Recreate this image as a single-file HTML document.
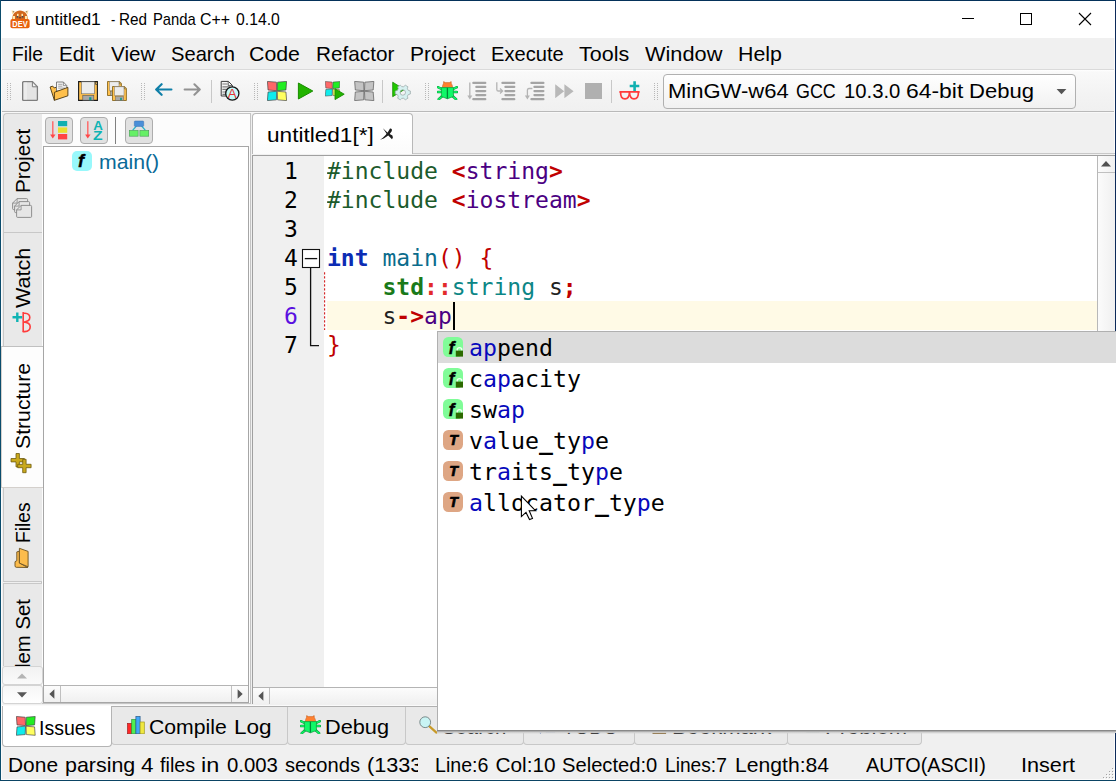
<!DOCTYPE html>
<html lang="en"><head><meta charset="utf-8"><title>untitled1 - Red Panda C++ 0.14.0</title>
<style>
html,body{margin:0;padding:0;background:#f0f0f0;}
body{width:1116px;height:781px;overflow:hidden;position:relative;font-family:"Liberation Sans",sans-serif;}
#w{position:absolute;left:0;top:0;width:1116px;height:781px;overflow:hidden;background:#f0f0f0;}
#w div,#w svg,#w span.t{position:absolute;box-sizing:border-box;}
span.t{white-space:pre;line-height:normal;transform-origin:0 0;font-family:"Liberation Sans",sans-serif;}
span.m{font-family:"DejaVu Sans Mono","Liberation Mono",monospace;}
.tab{background:#e9e9e9;border:1px solid #c8c8c8;}
.btn{background:#e1e1e1;border:1px solid #adadad;border-radius:4px;}
</style></head>
<body><div id="w">
<div style="left:1px;top:38px;width:1px;height:742px;background:#fbfbfb;"></div>
<div style="left:1114px;top:38px;width:1px;height:742px;background:#fbfbfb;"></div>
<div style="left:1px;top:779px;width:1114px;height:1px;background:#fbfbfb;"></div>
<div style="left:1px;top:1px;width:1114px;height:37px;background:#fff;"></div>
<svg style="left:10px;top:9px;" width="20" height="20" viewBox="0 0 20 20"><path d="M2.2 5.5L1.6 1.2L5.6 2.6Z" fill="#ffe2a8"/><path d="M17.8 5.5L18.4 1.2L14.4 2.6Z" fill="#ffe2a8"/><path d="M3 3.6L2.8 2.2L4.3 2.8Z" fill="#4a4a52"/><path d="M17 3.6L17.2 2.2L15.7 2.8Z" fill="#4a4a52"/><path d="M2 11C2 5 5.5 1.6 10 1.6C14.5 1.6 18 5 18 11Z" fill="#d2691e"/><rect x="2.6" y="7" width="2.4" height="3.4" fill="#ffe9b0"/><rect x="15" y="7" width="2.4" height="3.4" fill="#ffe9b0"/><rect x="7" y="4.8" width="1.6" height="2.4" fill="#ffe9b0"/><rect x="11.4" y="4.8" width="1.6" height="2.4" fill="#ffe9b0"/><rect x="6.6" y="7" width="1.6" height="1.6" fill="#4a4a52"/><rect x="11.8" y="7" width="1.6" height="1.6" fill="#4a4a52"/><path d="M8.8 8.2H11.2L10 9.8Z" fill="#3a3a42"/><rect x="0.4" y="10" width="19.2" height="9.2" rx="2" fill="#e8620c"/><text x="10" y="17.6" font-family="Liberation Sans, sans-serif" font-weight="bold" font-size="8.4" text-anchor="middle" fill="#fff" textLength="15.4" lengthAdjust="spacingAndGlyphs">DEV</text></svg>
<span class="t" style="left:34.74px;top:10.20px;font-size:16.4px;color:#000;transform:scaleX(1.0617);">untitled1</span>
<span class="t" style="left:110.50px;top:10.20px;font-size:16.4px;color:#000;transform:scaleX(0.7800);">-</span>
<span class="t" style="left:119.47px;top:10.20px;font-size:16.4px;color:#000;transform:scaleX(0.9321);">Red</span>
<span class="t" style="left:152.60px;top:10.20px;font-size:16.4px;color:#000;transform:scaleX(0.9021);">Panda</span>
<span class="t" style="left:200.33px;top:10.20px;font-size:16.4px;color:#000;transform:scaleX(0.9700);">C++</span>
<span class="t" style="left:236.20px;top:10.20px;font-size:16.4px;color:#000;transform:scaleX(0.9622);">0.14.0</span>
<svg style="left:960px;top:10px;" width="20" height="20" viewBox="0 0 20 20"><path d="M2 8.5H14" stroke="#000" stroke-width="1" fill="none"/></svg>
<svg style="left:1015px;top:10px;" width="20" height="20" viewBox="0 0 20 20"><rect x="5.5" y="3.5" width="11" height="11" stroke="#000" stroke-width="1" fill="none"/></svg>
<svg style="left:1075px;top:10px;" width="20" height="20" viewBox="0 0 20 20"><path d="M4 3L16 15M16 3L4 15" stroke="#000" stroke-width="1.1" fill="none"/></svg>
<span class="t" style="left:12.47px;top:41.70px;font-size:20.8px;color:#000;transform:scaleX(0.9250);">File</span>
<span class="t" style="left:58.71px;top:41.70px;font-size:20.8px;color:#000;transform:scaleX(0.9886);">Edit</span>
<span class="t" style="left:111.00px;top:41.70px;font-size:20.8px;color:#000;transform:scaleX(0.9911);">View</span>
<span class="t" style="left:171.03px;top:41.70px;font-size:20.8px;color:#000;transform:scaleX(0.9688);">Search</span>
<span class="t" style="left:249.47px;top:41.70px;font-size:20.8px;color:#000;transform:scaleX(1.0250);">Code</span>
<span class="t" style="left:315.50px;top:41.70px;font-size:20.8px;color:#000;transform:scaleX(0.9974);">Refactor</span>
<span class="t" style="left:410.09px;top:41.70px;font-size:20.8px;color:#000;transform:scaleX(1.0109);">Project</span>
<span class="t" style="left:491.03px;top:41.70px;font-size:20.8px;color:#000;transform:scaleX(0.9671);">Execute</span>
<span class="t" style="left:578.90px;top:41.70px;font-size:20.8px;color:#000;transform:scaleX(1.0333);">Tools</span>
<span class="t" style="left:644.90px;top:41.70px;font-size:20.8px;color:#000;transform:scaleX(1.0459);">Window</span>
<span class="t" style="left:737.87px;top:41.70px;font-size:20.8px;color:#000;transform:scaleX(1.0268);">Help</span>
<div style="left:2px;top:69px;width:1112px;height:1px;background:#dadada;"></div>
<div style="left:2px;top:70px;width:1112px;height:41px;background:linear-gradient(180deg,#ffffff 0,#f9f9f9 2px,#f3f3f3 60%,#f0f0f0 100%);"></div>
<div style="left:2px;top:111px;width:1112px;height:1px;background:#b9b9b9;"></div>
<div style="left:2px;top:112px;width:1112px;height:1px;background:#f8f8f8;"></div>
<svg style="left:7px;top:83px;" width="5" height="18" viewBox="0 0 5 18"><rect x="0" y="0" width="1" height="1" fill="#b8b8b8"/><rect x="3" y="0" width="1" height="1" fill="#b8b8b8"/><rect x="0" y="2" width="1" height="1" fill="#b8b8b8"/><rect x="3" y="2" width="1" height="1" fill="#b8b8b8"/><rect x="0" y="4" width="1" height="1" fill="#b8b8b8"/><rect x="3" y="4" width="1" height="1" fill="#b8b8b8"/><rect x="0" y="6" width="1" height="1" fill="#b8b8b8"/><rect x="3" y="6" width="1" height="1" fill="#b8b8b8"/><rect x="0" y="8" width="1" height="1" fill="#b8b8b8"/><rect x="3" y="8" width="1" height="1" fill="#b8b8b8"/><rect x="0" y="10" width="1" height="1" fill="#b8b8b8"/><rect x="3" y="10" width="1" height="1" fill="#b8b8b8"/><rect x="0" y="12" width="1" height="1" fill="#b8b8b8"/><rect x="3" y="12" width="1" height="1" fill="#b8b8b8"/><rect x="0" y="14" width="1" height="1" fill="#b8b8b8"/><rect x="3" y="14" width="1" height="1" fill="#b8b8b8"/><rect x="0" y="16" width="1" height="1" fill="#b8b8b8"/><rect x="3" y="16" width="1" height="1" fill="#b8b8b8"/></svg>
<svg style="left:141px;top:83px;" width="5" height="18" viewBox="0 0 5 18"><rect x="0" y="0" width="1" height="1" fill="#b8b8b8"/><rect x="3" y="0" width="1" height="1" fill="#b8b8b8"/><rect x="0" y="2" width="1" height="1" fill="#b8b8b8"/><rect x="3" y="2" width="1" height="1" fill="#b8b8b8"/><rect x="0" y="4" width="1" height="1" fill="#b8b8b8"/><rect x="3" y="4" width="1" height="1" fill="#b8b8b8"/><rect x="0" y="6" width="1" height="1" fill="#b8b8b8"/><rect x="3" y="6" width="1" height="1" fill="#b8b8b8"/><rect x="0" y="8" width="1" height="1" fill="#b8b8b8"/><rect x="3" y="8" width="1" height="1" fill="#b8b8b8"/><rect x="0" y="10" width="1" height="1" fill="#b8b8b8"/><rect x="3" y="10" width="1" height="1" fill="#b8b8b8"/><rect x="0" y="12" width="1" height="1" fill="#b8b8b8"/><rect x="3" y="12" width="1" height="1" fill="#b8b8b8"/><rect x="0" y="14" width="1" height="1" fill="#b8b8b8"/><rect x="3" y="14" width="1" height="1" fill="#b8b8b8"/><rect x="0" y="16" width="1" height="1" fill="#b8b8b8"/><rect x="3" y="16" width="1" height="1" fill="#b8b8b8"/></svg>
<svg style="left:254px;top:83px;" width="5" height="18" viewBox="0 0 5 18"><rect x="0" y="0" width="1" height="1" fill="#b8b8b8"/><rect x="3" y="0" width="1" height="1" fill="#b8b8b8"/><rect x="0" y="2" width="1" height="1" fill="#b8b8b8"/><rect x="3" y="2" width="1" height="1" fill="#b8b8b8"/><rect x="0" y="4" width="1" height="1" fill="#b8b8b8"/><rect x="3" y="4" width="1" height="1" fill="#b8b8b8"/><rect x="0" y="6" width="1" height="1" fill="#b8b8b8"/><rect x="3" y="6" width="1" height="1" fill="#b8b8b8"/><rect x="0" y="8" width="1" height="1" fill="#b8b8b8"/><rect x="3" y="8" width="1" height="1" fill="#b8b8b8"/><rect x="0" y="10" width="1" height="1" fill="#b8b8b8"/><rect x="3" y="10" width="1" height="1" fill="#b8b8b8"/><rect x="0" y="12" width="1" height="1" fill="#b8b8b8"/><rect x="3" y="12" width="1" height="1" fill="#b8b8b8"/><rect x="0" y="14" width="1" height="1" fill="#b8b8b8"/><rect x="3" y="14" width="1" height="1" fill="#b8b8b8"/><rect x="0" y="16" width="1" height="1" fill="#b8b8b8"/><rect x="3" y="16" width="1" height="1" fill="#b8b8b8"/></svg>
<svg style="left:425px;top:83px;" width="5" height="18" viewBox="0 0 5 18"><rect x="0" y="0" width="1" height="1" fill="#b8b8b8"/><rect x="3" y="0" width="1" height="1" fill="#b8b8b8"/><rect x="0" y="2" width="1" height="1" fill="#b8b8b8"/><rect x="3" y="2" width="1" height="1" fill="#b8b8b8"/><rect x="0" y="4" width="1" height="1" fill="#b8b8b8"/><rect x="3" y="4" width="1" height="1" fill="#b8b8b8"/><rect x="0" y="6" width="1" height="1" fill="#b8b8b8"/><rect x="3" y="6" width="1" height="1" fill="#b8b8b8"/><rect x="0" y="8" width="1" height="1" fill="#b8b8b8"/><rect x="3" y="8" width="1" height="1" fill="#b8b8b8"/><rect x="0" y="10" width="1" height="1" fill="#b8b8b8"/><rect x="3" y="10" width="1" height="1" fill="#b8b8b8"/><rect x="0" y="12" width="1" height="1" fill="#b8b8b8"/><rect x="3" y="12" width="1" height="1" fill="#b8b8b8"/><rect x="0" y="14" width="1" height="1" fill="#b8b8b8"/><rect x="3" y="14" width="1" height="1" fill="#b8b8b8"/><rect x="0" y="16" width="1" height="1" fill="#b8b8b8"/><rect x="3" y="16" width="1" height="1" fill="#b8b8b8"/></svg>
<svg style="left:654px;top:83px;" width="5" height="18" viewBox="0 0 5 18"><rect x="0" y="0" width="1" height="1" fill="#b8b8b8"/><rect x="3" y="0" width="1" height="1" fill="#b8b8b8"/><rect x="0" y="2" width="1" height="1" fill="#b8b8b8"/><rect x="3" y="2" width="1" height="1" fill="#b8b8b8"/><rect x="0" y="4" width="1" height="1" fill="#b8b8b8"/><rect x="3" y="4" width="1" height="1" fill="#b8b8b8"/><rect x="0" y="6" width="1" height="1" fill="#b8b8b8"/><rect x="3" y="6" width="1" height="1" fill="#b8b8b8"/><rect x="0" y="8" width="1" height="1" fill="#b8b8b8"/><rect x="3" y="8" width="1" height="1" fill="#b8b8b8"/><rect x="0" y="10" width="1" height="1" fill="#b8b8b8"/><rect x="3" y="10" width="1" height="1" fill="#b8b8b8"/><rect x="0" y="12" width="1" height="1" fill="#b8b8b8"/><rect x="3" y="12" width="1" height="1" fill="#b8b8b8"/><rect x="0" y="14" width="1" height="1" fill="#b8b8b8"/><rect x="3" y="14" width="1" height="1" fill="#b8b8b8"/><rect x="0" y="16" width="1" height="1" fill="#b8b8b8"/><rect x="3" y="16" width="1" height="1" fill="#b8b8b8"/></svg>
<div style="left:211px;top:80px;width:1px;height:23px;background:#c8c8c8;"></div>
<div style="left:382px;top:80px;width:1px;height:23px;background:#c8c8c8;"></div>
<div style="left:611px;top:80px;width:1px;height:23px;background:#c8c8c8;"></div>
<svg style="left:22px;top:81px;" width="17" height="20" viewBox="0 0 17 20"><path d="M2 0.6H10.4L15.4 5.8V18.4Q15.4 19.4 14.4 19.4H2Q0.6 19.4 0.6 18.4V1.6Q0.6 0.6 2 0.6Z" fill="#e4e4e4" stroke="#7e7e7e" stroke-width="1.3"/><path d="M2 1.6H5V18.4H2Z" fill="#ececec"/><path d="M10.4 0.8V5.8H15.2Z" fill="#f2f2f2" stroke="#7e7e7e" stroke-width="1"/></svg><svg style="left:49px;top:81px;" width="21" height="21" viewBox="0 0 21 21"><path d="M1.1 6L3.7 5.1L5.2 6.9L7.6 6.2V11L5.4 19.3Z" fill="#ffc04c" stroke="#4a3610" stroke-width="0.9" stroke-linejoin="round"/><path d="M7.5 1H14.4L17.8 4.6V10H7.5Z" fill="#f6f6f6" stroke="#707070" stroke-width="0.9" stroke-linejoin="round"/><path d="M14.4 1.2V4.6H17.6" fill="none" stroke="#707070" stroke-width="0.7"/><path d="M9.2 3.3H13.4M9.2 5.2H13.4M9.2 7.1H16" stroke="#9a9a9a" stroke-width="0.9"/><path d="M5.4 11.3L18.9 6.4V14.8L5.4 19.3Z" fill="#ffc04c" stroke="#4a3610" stroke-width="0.9" stroke-linejoin="round"/></svg><svg style="left:78px;top:81px;" width="20" height="20" viewBox="0 0 20 20"><g transform="scale(1)"><path d="M0.6 0.6H19.4V19.4H0.6Z" fill="#ffc04c" stroke="#1a1a1a" stroke-width="1.1"/><rect x="3.6" y="0.8" width="12.8" height="12" fill="#ececec" stroke="#6a6a6a" stroke-width="0.6"/><path d="M17.6 1.2V3.4H19" stroke="#1a1a1a" stroke-width="0.7" fill="#fff6e0"/><rect x="4.8" y="14.6" width="11" height="4.6" fill="#a8a8a8" stroke="#555" stroke-width="0.6"/><rect x="11.2" y="16.2" width="2.2" height="3" fill="#0a9a8a"/></g></svg><svg style="left:107px;top:81px;" width="15" height="15" viewBox="0 0 15 15"><path d="M0.5 0.5H12.6L14.4 2.3V14.5H0.5Z" fill="#ffc04c" stroke="#8a6a20" stroke-width="0.9"/><rect x="2.6" y="0.8" width="9.4" height="8.6" fill="#ececec" stroke="#8a8a8a" stroke-width="0.6"/><path d="M12.4 0.8V2.8H14" stroke="#6a5010" stroke-width="0.7" fill="#fff"/><rect x="3.6" y="10.6" width="8" height="3.8" fill="#a8a8a8" stroke="#666" stroke-width="0.5"/><rect x="8.2" y="11.8" width="1.6" height="2.4" fill="#0a9a8a"/></svg><svg style="left:112px;top:85.6px;" width="15" height="15" viewBox="0 0 15 15"><path d="M0.5 0.5H12.6L14.4 2.3V14.5H0.5Z" fill="#ffc04c" stroke="#8a6a20" stroke-width="0.9"/><rect x="2.6" y="0.8" width="9.4" height="8.6" fill="#ececec" stroke="#8a8a8a" stroke-width="0.6"/><path d="M12.4 0.8V2.8H14" stroke="#6a5010" stroke-width="0.7" fill="#fff"/><rect x="3.6" y="10.6" width="8" height="3.8" fill="#a8a8a8" stroke="#666" stroke-width="0.5"/><rect x="8.2" y="11.8" width="1.6" height="2.4" fill="#0a9a8a"/></svg><svg style="left:154px;top:83px;" width="19" height="13" viewBox="0 0 19 13"><path d="M17.4 6.5H2.6M7.6 1.2L2.2 6.5L7.6 11.8" stroke="#0f7fa8" stroke-width="2.2" fill="none" stroke-linecap="round" stroke-linejoin="round"/></svg><svg style="left:183px;top:83px;" width="19" height="13" viewBox="0 0 19 13"><path d="M1.6 6.5H16.4M11.4 1.2L16.8 6.5L11.4 11.8" stroke="#929292" stroke-width="2" fill="none" stroke-linecap="round" stroke-linejoin="round"/></svg><svg style="left:220px;top:80px;" width="21" height="22" viewBox="0 0 21 22"><path d="M1.2 1.4H8.4L12.4 5.4V16H1.2Z" fill="#f4f4f4" stroke="#3c3c3c" stroke-width="1"/><path d="M8.2 1.6V5.6H12.2" fill="none" stroke="#3c3c3c" stroke-width="0.8"/><path d="M2.4 4H7.4M2.4 6.8H10M2.4 9.4H7M2.4 12H6M2.4 14.4H6" stroke="#7a7a7a" stroke-width="1.2"/><circle cx="12.3" cy="13.5" r="6.6" fill="#c6f8f8" stroke="#141414" stroke-width="1.3"/><text x="12.3" y="17.8" font-family="Liberation Sans, sans-serif" font-size="13.4" text-anchor="middle" fill="#e83434">A</text></svg><svg style="left:267px;top:81px;" width="20" height="20" viewBox="0 0 20 20"><path d="M0.40 0.40L9.40 1.15L9.75 9.70L1.05 9.00Z" fill="#ff6868" stroke="#3c3c3c" stroke-width="0.65" stroke-linejoin="round"/><path d="M19.60 0.40L10.60 1.15L10.25 9.70L18.95 9.00Z" fill="#22ee22" stroke="#3c3c3c" stroke-width="0.65" stroke-linejoin="round"/><path d="M0.40 19.60L9.40 18.85L9.75 10.30L1.05 11.00Z" fill="#10ecec" stroke="#3c3c3c" stroke-width="0.65" stroke-linejoin="round"/><path d="M19.60 19.60L10.60 18.85L10.25 10.30L18.95 11.00Z" fill="#ffff60" stroke="#3c3c3c" stroke-width="0.65" stroke-linejoin="round"/></svg><svg style="left:297px;top:82px;" width="17" height="18" viewBox="0 0 17 18"><path d="M1.4 1L15.8 9L1.4 17Z" fill="#22b400" stroke="#1a8c00" stroke-width="1" stroke-linejoin="round"/></svg><svg style="left:325px;top:81px;" width="15.2" height="15.6" viewBox="0 0 20 20"><path d="M0.40 0.40L9.40 1.15L9.75 9.70L1.05 9.00Z" fill="#ff6868" stroke="#3c3c3c" stroke-width="0.65" stroke-linejoin="round"/><path d="M19.60 0.40L10.60 1.15L10.25 9.70L18.95 9.00Z" fill="#22ee22" stroke="#3c3c3c" stroke-width="0.65" stroke-linejoin="round"/><path d="M0.40 19.60L9.40 18.85L9.75 10.30L1.05 11.00Z" fill="#10ecec" stroke="#3c3c3c" stroke-width="0.65" stroke-linejoin="round"/><path d="M19.60 19.60L10.60 18.85L10.25 10.30L18.95 11.00Z" fill="#ffff60" stroke="#3c3c3c" stroke-width="0.65" stroke-linejoin="round"/></svg><svg style="left:334px;top:88px;" width="11" height="12.4" viewBox="0 0 11 12.4"><path d="M1 0.8L10.2 6.2L1 11.6Z" fill="#22b400" stroke="#1a8c00" stroke-width="0.9" stroke-linejoin="round"/></svg><svg style="left:354px;top:81px;" width="20.5" height="20" viewBox="0 0 20 20"><path d="M0.40 0.40L9.40 1.15L9.75 9.70L1.05 9.00Z" fill="#c4c4c4" stroke="#4e4e4e" stroke-width="0.65" stroke-linejoin="round"/><path d="M19.60 0.40L10.60 1.15L10.25 9.70L18.95 9.00Z" fill="#c4c4c4" stroke="#4e4e4e" stroke-width="0.65" stroke-linejoin="round"/><path d="M0.40 19.60L9.40 18.85L9.75 10.30L1.05 11.00Z" fill="#c4c4c4" stroke="#4e4e4e" stroke-width="0.65" stroke-linejoin="round"/><path d="M19.60 19.60L10.60 18.85L10.25 10.30L18.95 11.00Z" fill="#c4c4c4" stroke="#4e4e4e" stroke-width="0.65" stroke-linejoin="round"/></svg><svg style="left:391.5px;top:81px;" width="21" height="21" viewBox="0 0 21 21"><path d="M0.7 1.2L12.4 8.5L0.7 15.7Z" fill="#20c800" stroke="#168a00" stroke-width="0.8" stroke-linejoin="round"/><path d="M18.35 9.97L18.35 13.03L16.32 13.58L15.36 15.24L15.90 17.27L13.25 18.80L11.76 17.32L9.84 17.32L8.35 18.80L5.70 17.27L6.24 15.24L5.28 13.58L3.25 13.03L3.25 9.97L5.28 9.42L6.24 7.76L5.70 5.73L8.35 4.20L9.84 5.68L11.76 5.68L13.25 4.20L15.90 5.73L15.36 7.76L16.32 9.42ZM8.10 11.50a2.7 2.7 0 1 0 5.4 0a2.7 2.7 0 1 0 -5.4 0Z" fill="#d6f0f0" fill-rule="evenodd" stroke="#93a4a4" stroke-width="0.7" stroke-linejoin="round"/></svg><svg style="left:437px;top:81.4px;" width="21" height="19" viewBox="0 0 21 19"><path d="M4.6 8L0.9 6.2M4.6 11H0.9M5.4 15L1.7 18.3M16.2 8L19.9 6.2M16.2 11H19.9M15.4 15L19.1 18.3" stroke="#0a9a3a" stroke-width="2.5" fill="none" stroke-linecap="round"/><path d="M4.6 8L0.9 6.2M4.6 11H0.9M5.4 15L1.7 18.3M16.2 8L19.9 6.2M16.2 11H19.9M15.4 15L19.1 18.3" stroke="#10f868" stroke-width="1.5" fill="none" stroke-linecap="round"/><path d="M5.3 6.7Q5.6 3.6 6.5 2.4L6.6 0.6L8.4 1.6H12.4L14.2 0.6L14.3 2.4Q15.4 3.6 15.7 6.7Z" fill="#ff8030" stroke="#c05a18" stroke-width="0.5" stroke-linejoin="round"/><path d="M4.2 6.6H16.6Q16 11 16.6 15.4L10.4 17.8L4.2 15.4Q4.8 11 4.2 6.6Z" fill="#10f868" stroke="#0a9a3a" stroke-width="0.7" stroke-linejoin="round"/><path d="M10.4 6.8V17.6" stroke="#008a38" stroke-width="1.3"/></svg><svg style="left:467px;top:81px;" width="21" height="20" viewBox="0 0 21 20"><path d="M6.3 1.9H18.3" stroke="#a4a4a4" stroke-width="2.2" stroke-linecap="round"/><path d="M9.3 5.9H18.3" stroke="#a4a4a4" stroke-width="2.2" stroke-linecap="round"/><path d="M9.3 10.1H18.3" stroke="#a4a4a4" stroke-width="2.2" stroke-linecap="round"/><path d="M9.3 14.1H18.3" stroke="#a4a4a4" stroke-width="2.2" stroke-linecap="round"/><path d="M6.3 18.2H18.3" stroke="#a4a4a4" stroke-width="2.2" stroke-linecap="round"/><path d="M2.8 1.6V16" stroke="#b4b4b4" stroke-width="1.3"/><path d="M0.3 14.6H5.3L2.8 18.6Z" fill="#b4b4b4"/></svg><svg style="left:496px;top:81px;" width="21" height="20" viewBox="0 0 21 20"><path d="M6.4 1.9H18.3" stroke="#a4a4a4" stroke-width="2.2" stroke-linecap="round"/><path d="M9.4 5.9H18.3" stroke="#a4a4a4" stroke-width="2.2" stroke-linecap="round"/><path d="M9.4 10.1H18.3" stroke="#a4a4a4" stroke-width="2.2" stroke-linecap="round"/><path d="M9.4 14.1H18.3" stroke="#a4a4a4" stroke-width="2.2" stroke-linecap="round"/><path d="M6.4 18.2H18.3" stroke="#a4a4a4" stroke-width="2.2" stroke-linecap="round"/><path d="M0.8 1.2V8.4Q0.8 10 2.4 10H6.2M4 7.6L6.6 10L4 12.4" stroke="#b4b4b4" stroke-width="1.3" fill="none"/></svg><svg style="left:525px;top:81px;" width="21" height="20" viewBox="0 0 21 20"><path d="M6.4 1.9H18.4" stroke="#a4a4a4" stroke-width="2.2" stroke-linecap="round"/><path d="M9.4 5.9H18.4" stroke="#a4a4a4" stroke-width="2.2" stroke-linecap="round"/><path d="M9.4 10.1H18.4" stroke="#a4a4a4" stroke-width="2.2" stroke-linecap="round"/><path d="M9.4 14.1H18.4" stroke="#a4a4a4" stroke-width="2.2" stroke-linecap="round"/><path d="M6.4 18.2H18.4" stroke="#a4a4a4" stroke-width="2.2" stroke-linecap="round"/><path d="M7.4 7.5H4Q2.4 7.5 2.4 9.2V16" stroke="#b4b4b4" stroke-width="1.3" fill="none"/><path d="M-0.1 14.6H4.9L2.4 18.6Z" fill="#b4b4b4"/></svg><svg style="left:555px;top:84px;" width="19" height="14.4" viewBox="0 0 19 14.4"><path d="M0.2 0.2L9.2 7.2L0.2 14.2ZM9.4 0.2L18.6 7.2L9.4 14.2Z" fill="#b8b8b8"/></svg><div style="left:585px;top:83px;width:16.5px;height:16px;background:#b0b0b0;"></div><svg style="left:619.2px;top:80px;" width="22" height="21" viewBox="0 0 22 21"><path d="M1 11.9H20M1.6 12Q1.4 18.9 6 18.9Q10.2 18.9 10.5 12Q10.8 18.9 15 18.9Q19.6 18.9 19.4 12" stroke="#ff3a3a" stroke-width="1.7" fill="none" stroke-linecap="round" stroke-linejoin="round"/><path d="M15.6 1.2V10.9M10.7 6H20.3" stroke="#10b0b0" stroke-width="2.6" fill="none"/></svg>
<div style="left:663px;top:74px;width:413px;height:35px;background:linear-gradient(180deg,#ffffff,#f1f1f1);border:1px solid #b0b0b0;border-radius:4px;"></div>
<span class="t" style="left:668.44px;top:79.10px;font-size:20.8px;color:#000;transform:scaleX(1.0584);">MinGW-w64</span>
<span class="t" style="left:795.74px;top:79.10px;font-size:20.8px;color:#000;transform:scaleX(0.8614);">GCC</span>
<span class="t" style="left:843.82px;top:79.10px;font-size:20.8px;color:#000;transform:scaleX(0.9750);">10.3.0</span>
<span class="t" style="left:905.80px;top:79.10px;font-size:20.8px;color:#000;transform:scaleX(1.1020);">64-bit</span>
<span class="t" style="left:969.34px;top:79.10px;font-size:20.8px;color:#000;transform:scaleX(1.0610);">Debug</span>
<svg style="left:1055px;top:88px;" width="13" height="8" viewBox="0 0 13 8"><path d="M1.6 1.1H11.4L6.5 6.2Z" fill="#555"/></svg>
<div style="left:41px;top:113px;width:210px;height:591px;background:#fcfcfc;border:1px solid #c4c4c4;"></div>
<div class="tab" style="left:3px;top:113px;width:39px;height:120px;border-radius:4px 0 0 0;border-right:none;"></div>
<div class="tab" style="left:3px;top:233px;width:39px;height:114px;border-right:none;border-top:none;"></div>
<div class="tab" style="left:3px;top:487px;width:39px;height:95px;border-right:none;"></div>
<div class="tab" style="left:3px;top:583px;width:39px;height:90px;border-right:none;"></div>
<div style="left:1px;top:346px;width:42px;height:142px;background:#fdfdfd;border:1px solid #d4d0cc;border-right:none;border-top-color:#c0c0c0;"></div>
<span class="t" style="left:10.80px;top:193.19px;font-size:20.8px;color:#000;transform:rotate(-90deg) scaleX(0.9922);">Project</span>
<span class="t" style="left:10.80px;top:307.80px;font-size:20.8px;color:#000;transform:rotate(-90deg) scaleX(1.0368);">Watch</span>
<span class="t" style="left:10.80px;top:448.62px;font-size:20.8px;color:#000;transform:rotate(-90deg) scaleX(1.0193);">Structure</span>
<span class="t" style="left:10.80px;top:543.33px;font-size:20.8px;color:#000;transform:rotate(-90deg) scaleX(0.9262);">Files</span>
<span class="t" style="left:10.80px;top:711.48px;font-size:20.8px;color:#000;transform:rotate(-90deg) scaleX(0.9781);">Problem Set</span>
<svg style="left:12px;top:198px;" width="21" height="20" viewBox="0 0 21 20"><path d="M0.6 5.1L5.1 0.6H14.6Q15.6 0.6 15.6 1.6V10.6Q15.6 11.6 14.6 11.6H1.6Q0.6 11.6 0.6 10.6Z" fill="#e6e6e6" stroke="#868686" stroke-width="0.9" stroke-linejoin="round"/><path d="M0.6 5.1H5.1V0.6" fill="none" stroke="#868686" stroke-width="0.8"/><path d="M2.6 8.1L7.1 3.6H16.6Q17.6 3.6 17.6 4.6V13.6Q17.6 14.6 16.6 14.6H3.6Q2.6 14.6 2.6 13.6Z" fill="#e6e6e6" stroke="#868686" stroke-width="0.9" stroke-linejoin="round"/><path d="M2.6 8.1H7.1V3.6" fill="none" stroke="#868686" stroke-width="0.8"/><path d="M4.6 11.9L9.1 7.4H18.6Q19.6 7.4 19.6 8.4V18.4Q19.6 19.4 18.6 19.4H5.6Q4.6 19.4 4.6 18.4Z" fill="#e6e6e6" stroke="#868686" stroke-width="0.9" stroke-linejoin="round"/><path d="M4.6 11.9H9.1V7.4" fill="none" stroke="#868686" stroke-width="0.8"/></svg><svg style="left:11.5px;top:311.5px;" width="20" height="21" viewBox="0 0 20 21"><path d="M5.3 0.5V10.1M0.5 5.2H10.2" stroke="#10b4b4" stroke-width="2.4"/><path d="M11.2 0.6V19.8M11 1.2H13Q17.8 1.4 17.8 5.6Q17.8 9.6 11.4 10.2M11.4 10Q18.2 10.4 18.2 14.8Q18.2 19.4 12.6 19.6H11" stroke="#ff3c3c" stroke-width="1.6" fill="none" stroke-linecap="round"/></svg><svg style="left:10px;top:452px;" width="22" height="22" viewBox="0 0 22 22"><path d="M6 1.5h3.4v5h5v3.4h-5v5h-3.4v-5h-5v-3.4h5z" fill="#c9a91c" stroke="#6e5c10" stroke-width="0.8" stroke-linejoin="round"/><path d="M12.7 7.3h3.4v5h5v3.4h-5v5h-3.4v-5h-5v-3.4h5z" fill="#c9a91c" stroke="#6e5c10" stroke-width="0.8" stroke-linejoin="round"/></svg><svg style="left:14px;top:547px;" width="16" height="22" viewBox="0 0 16 22"><path d="M2.8 4.9L5.4 4.2V16L13.8 20.5L2.2 20.3Q1 20.1 1 18.9V14.7L2.8 13.7Z" fill="#fcbc4c" stroke="#6a5020" stroke-width="0.9" stroke-linejoin="round"/><path d="M5.4 1.3L14.1 4.4V19.8L5.4 16.1Z" fill="#fcbc4c" stroke="#6a5020" stroke-width="0.9" stroke-linejoin="round"/></svg>
<div style="left:2px;top:666px;width:40px;height:41px;background:#f0f0f0;"></div>
<div style="left:2px;top:666px;width:41px;height:19px;background:linear-gradient(180deg,#f2f2f2,#fafafa);border:1px solid #d4d4d4;border-radius:3px;"></div>
<div style="left:2px;top:685px;width:41px;height:19px;background:linear-gradient(180deg,#f6f6f6,#ffffff);border:1px solid #d4d4d4;border-radius:3px;"></div>
<svg style="left:16px;top:672px;" width="12" height="8" viewBox="0 0 12 8"><path d="M1 6.6L6 1.4L11 6.6Z" fill="#b4b4b4"/></svg>
<svg style="left:16px;top:691px;" width="12" height="8" viewBox="0 0 12 8"><path d="M1 1.2H11L6 6.6Z" fill="#585858"/></svg>
<div class="btn" style="left:45px;top:117px;width:28px;height:27px;"></div>
<div class="btn" style="left:80px;top:117px;width:28px;height:27px;"></div>
<div style="left:115px;top:117px;width:1px;height:27px;background:#808080;"></div>
<div class="btn" style="left:125px;top:117px;width:28px;height:27px;"></div>
<svg style="left:50px;top:121px;" width="18" height="19" viewBox="0 0 18 19"><path d="M2.8 0.2V15" stroke="#ff6464" stroke-width="1.4"/><path d="M0.1 13.6H5.5L2.8 17.4Z" fill="#ff4848"/><rect x="8" y="0" width="9.2" height="5.2" fill="#10b0b0"/><rect x="8" y="6.4" width="9.2" height="5.4" fill="#e8e030"/><rect x="8" y="13" width="9.2" height="5.4" fill="#ff4444"/></svg><svg style="left:85px;top:120px;" width="19" height="21" viewBox="0 0 19 21"><path d="M2.8 1.2V16" stroke="#ff6464" stroke-width="1.4"/><path d="M0.1 14.6H5.5L2.8 18.4Z" fill="#ff4848"/><text x="13.1" y="9.7" font-family="Liberation Sans, sans-serif" font-weight="bold" font-size="13.4" text-anchor="middle" fill="#10b4b4">A</text><text x="12.8" y="19.9" font-family="Liberation Sans, sans-serif" font-weight="bold" font-size="12.6" text-anchor="middle" fill="#10b4b4" textLength="9.6" lengthAdjust="spacingAndGlyphs">Z</text></svg><svg style="left:129px;top:120px;" width="21" height="20" viewBox="0 0 21 20"><path d="M7.4 6L3.6 10.4M12.6 6L16.4 10.4" stroke="#28b4c8" stroke-width="1.2" fill="none"/><rect x="5.3" y="1" width="9.4" height="5.4" rx="0.8" fill="#4a8fd8" stroke="#3a70b0" stroke-width="0.5"/><rect x="0.3" y="10.4" width="8.8" height="5.8" fill="#66f066" stroke="#4a9a5a" stroke-width="0.6"/><rect x="10.9" y="10.4" width="8.8" height="5.8" fill="#66f066" stroke="#4a9a5a" stroke-width="0.6"/></svg>
<div style="left:43px;top:146px;width:206px;height:557px;background:#fff;border:1px solid #a6a6a6;"></div>
<div style="left:72px;top:151px;width:20px;height:20px;background:#98f8fb;border-radius:5px;"></div>
<span class="t" style="left:77.60px;top:151.20px;font-size:18px;color:#000;transform:scaleX(1.0125);font-weight:bold;font-style:italic;-webkit-text-stroke:0.35px #000;">f</span>
<span class="t" style="left:98.58px;top:149.50px;font-size:20.8px;color:#0a6a98;transform:scaleX(1.0211);">main()</span>
<div style="left:44px;top:685px;width:204px;height:17px;background:linear-gradient(180deg,#fcfcfc,#f0f0f0);border-top:1px solid #b4b4b4;"></div><div style="left:44px;top:686px;width:17px;height:16px;border-right:1px solid #c0c0c0;"></div><svg style="left:48.6px;top:688.6px;" width="6" height="10" viewBox="0 0 6 10"><path d="M5.4 0.2V9.8L0.3 5Z" fill="#555"/></svg><div style="left:231px;top:686px;width:17px;height:16px;border-left:1px solid #c0c0c0;"></div><svg style="left:236.6px;top:688.6px;" width="6" height="10" viewBox="0 0 6 10"><path d="M0.6 0.2V9.8L5.7 5Z" fill="#555"/></svg>
<div style="left:412px;top:153px;width:703px;height:1px;background:#c8c8c8;"></div>
<div style="left:252px;top:113px;width:161px;height:41px;background:linear-gradient(180deg,#fff 40%,#fbfbfb);border:1px solid #b8b8b8;border-bottom:none;border-radius:4px 4px 0 0;"></div>
<span class="t" style="left:267.01px;top:122.90px;font-size:20.8px;color:#000;transform:scaleX(1.0865);">untitled1[*]</span>
<svg style="left:380px;top:128px;" width="14" height="13" viewBox="0 0 14 13"><path d="M0.1 11.8Q6.4 7.6 10 0.5Q12.6 0.2 11.7 3.2Q8 9.4 0.1 11.8Z" fill="#1c1c1c"/><path d="M2.9 0.2Q6 6 12 11.3Q13.6 9.6 12.4 7.6Q7.2 5 2.9 0.2Z" fill="#1c1c1c"/></svg>
<div style="left:252px;top:155px;width:863px;height:549px;background:#fff;border:1px solid #a0a0a0;border-right:none;"></div>
<div style="left:253px;top:156px;width:71px;height:531px;background:#f0f0f0;"></div>
<div style="left:327px;top:301px;width:771px;height:29px;background:#fffae6;"></div>
<span class="t m" style="left:283.60px;top:158.20px;font-size:23px;color:#000;transform:scaleX(1.0008);">1</span>
<span class="t m" style="left:283.60px;top:187.20px;font-size:23px;color:#000;transform:scaleX(1.0008);">2</span>
<span class="t m" style="left:283.60px;top:216.20px;font-size:23px;color:#000;transform:scaleX(1.0008);">3</span>
<span class="t m" style="left:283.60px;top:245.20px;font-size:23px;color:#000;transform:scaleX(1.0008);">4</span>
<span class="t m" style="left:283.60px;top:274.20px;font-size:23px;color:#000;transform:scaleX(1.0008);">5</span>
<span class="t m" style="left:283.60px;top:303.20px;font-size:23px;color:#5a10e0;transform:scaleX(1.0008);">6</span>
<span class="t m" style="left:283.60px;top:332.20px;font-size:23px;color:#000;transform:scaleX(1.0008);">7</span>
<span class="t m" style="left:327.00px;top:158.20px;font-size:23px;color:#000;transform:scaleX(1.0015);"><span style="color:#1c5b2c">#include </span><span style="color:#c00000;font-weight:bold">&lt;</span><span style="color:#4b0082">string</span><span style="color:#c00000;font-weight:bold">&gt;</span></span>
<span class="t m" style="left:327.00px;top:187.20px;font-size:23px;color:#000;transform:scaleX(1.0015);"><span style="color:#1c5b2c">#include </span><span style="color:#c00000;font-weight:bold">&lt;</span><span style="color:#4b0082">iostream</span><span style="color:#c00000;font-weight:bold">&gt;</span></span>
<span class="t m" style="left:327.00px;top:245.20px;font-size:23px;color:#000;transform:scaleX(1.0014);"><span style="color:#0c2cb4;font-weight:bold">int</span><span style="color:#0b6c8c"> main</span><span style="color:#c00000">()</span><span style="color:#c00000"> {</span></span>
<span class="t m" style="left:327.00px;top:274.20px;font-size:23px;color:#000;transform:scaleX(1.0015);">    <span style="color:#1a7a1a;font-weight:bold">std</span><span style="color:#e22a2a;font-weight:bold">::</span><span style="color:#0c8686">string</span><span style="color:#222"> s</span><span style="color:#c00000;font-weight:bold">;</span></span>
<span class="t m" style="left:327.00px;top:303.20px;font-size:23px;color:#000;transform:scaleX(1.0014);">    <span style="color:#222">s</span><span style="color:#c00000;font-weight:bold">-&gt;</span><span style="color:#4b0082">ap</span></span>
<span class="t m" style="left:327.00px;top:332.20px;font-size:23px;color:#000;transform:scaleX(1.0008);"><span style="color:#c00000">}</span></span>
<div style="left:453px;top:302px;width:2px;height:28px;background:#000;"></div>
<svg style="left:300px;top:245px;" width="26" height="110" viewBox="0 0 26 110"><rect x="2.5" y="4.5" width="17" height="18" fill="#fff" stroke="#111" stroke-width="1.1"/><path d="M4.8 13.6H17.2" stroke="#111" stroke-width="1.3"/><path d="M10.6 23V100.6H19" stroke="#111" stroke-width="1.3" fill="none"/><path d="M24.6 27.2V85" stroke="#d42020" stroke-width="1.1" stroke-dasharray="2.4 1.6" fill="none"/></svg>
<div style="left:1097px;top:156px;width:1px;height:531px;background:#b8b8b8;"></div>
<div style="left:1098px;top:156px;width:17px;height:531px;background:linear-gradient(90deg,#fbfbfb,#f0f0f0);"></div>
<div style="left:1098px;top:172px;width:17px;height:1px;background:#c0c0c0;"></div>
<svg style="left:1100px;top:160px;" width="12" height="8" viewBox="0 0 12 8"><path d="M1 6.5L6 1L11 6.5Z" fill="#505050"/></svg>
<div style="left:253px;top:687px;width:845px;height:17px;background:linear-gradient(180deg,#fcfcfc,#f0f0f0);border-top:1px solid #b4b4b4;"></div><div style="left:253px;top:688px;width:17px;height:16px;border-right:1px solid #c0c0c0;"></div><svg style="left:257.6px;top:690.6px;" width="6" height="10" viewBox="0 0 6 10"><path d="M5.4 0.2V9.8L0.3 5Z" fill="#555"/></svg>
<div style="left:2px;top:705px;width:1112px;height:1px;background:#fafafa;"></div>
<div style="left:2px;top:706px;width:1112px;height:1px;background:#b0b0b0;"></div>
<div style="left:2px;top:707px;width:1112px;height:1px;background:#c6c6c6;"></div>
<div class="tab" style="left:111px;top:707px;width:177px;height:38px;border-top:none;border-radius:0 0 4px 4px;"></div>
<div class="tab" style="left:287px;top:707px;width:119px;height:38px;border-top:none;border-radius:0 0 4px 4px;"></div>
<div class="tab" style="left:405px;top:707px;width:118.5px;height:38px;border-top:none;border-radius:0 0 4px 4px;"></div>
<div class="tab" style="left:522.5px;top:707px;width:112.5px;height:38px;border-top:none;border-radius:0 0 4px 4px;"></div>
<div class="tab" style="left:634px;top:707px;width:154px;height:38px;border-top:none;border-radius:0 0 4px 4px;"></div>
<div class="tab" style="left:787px;top:707px;width:135px;height:38px;border-top:none;border-radius:0 0 4px 4px;"></div>
<div style="left:2px;top:706px;width:110px;height:41px;background:#fff;border:1px solid #b4b4b4;border-top:none;border-radius:0 0 4px 4px;"></div>
<span class="t" style="left:39.02px;top:715.90px;font-size:20.8px;color:#000;transform:scaleX(0.9379);">Issues</span>
<span class="t" style="left:149.48px;top:715.30px;font-size:20.8px;color:#000;transform:scaleX(1.0200);">Compile</span>
<span class="t" style="left:233.52px;top:715.30px;font-size:20.8px;color:#000;transform:scaleX(1.0848);">Log</span>
<span class="t" style="left:325.36px;top:715.30px;font-size:20.8px;color:#000;transform:scaleX(1.0441);">Debug</span>
<span class="t" style="left:442.02px;top:715.30px;font-size:20.8px;color:#000;transform:scaleX(0.9766);">Search</span>
<span class="t" style="left:563.00px;top:715.30px;font-size:20.8px;color:#000;transform:scaleX(0.9237);">TODO</span>
<span class="t" style="left:672.44px;top:715.30px;font-size:20.8px;color:#000;transform:scaleX(1.0591);">Bookmark</span>
<span class="t" style="left:825.44px;top:715.30px;font-size:20.8px;color:#000;transform:scaleX(1.0600);">Problem</span>
<svg style="left:16.3px;top:716.3px;" width="19.6" height="19.8" viewBox="0 0 20 20"><path d="M0.40 0.40L9.40 1.15L9.75 9.70L1.05 9.00Z" fill="#ff6868" stroke="#3c3c3c" stroke-width="0.65" stroke-linejoin="round"/><path d="M19.60 0.40L10.60 1.15L10.25 9.70L18.95 9.00Z" fill="#22ee22" stroke="#3c3c3c" stroke-width="0.65" stroke-linejoin="round"/><path d="M0.40 19.60L9.40 18.85L9.75 10.30L1.05 11.00Z" fill="#10ecec" stroke="#3c3c3c" stroke-width="0.65" stroke-linejoin="round"/><path d="M19.60 19.60L10.60 18.85L10.25 10.30L18.95 11.00Z" fill="#ffff60" stroke="#3c3c3c" stroke-width="0.65" stroke-linejoin="round"/></svg><svg style="left:127px;top:716px;" width="18" height="18.4" viewBox="0 0 18 18.4"><rect x="0.5" y="7.4" width="4.2" height="10.4" fill="#ff2828" stroke="#a02020" stroke-width="0.7"/><rect x="4.7" y="3.6" width="4.2" height="14.2" fill="#50f050" stroke="#2a9a3a" stroke-width="0.7"/><rect x="8.9" y="0.5" width="4.2" height="17.3" fill="#40a8f8" stroke="#2a5a8a" stroke-width="0.7"/><rect x="13.1" y="6" width="4.2" height="11.8" fill="#f0e840" stroke="#a09a20" stroke-width="0.7"/></svg><svg style="left:300.4px;top:715px;" width="21" height="19" viewBox="0 0 21 19"><path d="M4.6 8L0.9 6.2M4.6 11H0.9M5.4 15L1.7 18.3M16.2 8L19.9 6.2M16.2 11H19.9M15.4 15L19.1 18.3" stroke="#0a9a3a" stroke-width="2.5" fill="none" stroke-linecap="round"/><path d="M4.6 8L0.9 6.2M4.6 11H0.9M5.4 15L1.7 18.3M16.2 8L19.9 6.2M16.2 11H19.9M15.4 15L19.1 18.3" stroke="#10f868" stroke-width="1.5" fill="none" stroke-linecap="round"/><path d="M5.3 6.7Q5.6 3.6 6.5 2.4L6.6 0.6L8.4 1.6H12.4L14.2 0.6L14.3 2.4Q15.4 3.6 15.7 6.7Z" fill="#ff8030" stroke="#c05a18" stroke-width="0.5" stroke-linejoin="round"/><path d="M4.2 6.6H16.6Q16 11 16.6 15.4L10.4 17.8L4.2 15.4Q4.8 11 4.2 6.6Z" fill="#10f868" stroke="#0a9a3a" stroke-width="0.7" stroke-linejoin="round"/><path d="M10.4 6.8V17.6" stroke="#008a38" stroke-width="1.3"/></svg><svg style="left:419px;top:716px;" width="19" height="18" viewBox="0 0 19 18"><path d="M9.4 9.4L17.4 16.6" stroke="#c89a28" stroke-width="2.2" stroke-linecap="round"/><circle cx="6.2" cy="6.2" r="5.4" fill="#c8f4f4" stroke="#7a8a8a" stroke-width="1"/></svg><svg style="left:538px;top:715px;" width="18" height="19" viewBox="0 0 18 19"><path d="M0.8 5.4L2.4 7.6L4.6 3.4M0.8 15.4L2.4 17.6L4.6 15.2" stroke="#2a50a8" stroke-width="1.5" fill="none"/><path d="M7.8 6.5H17.2M7.8 17H17.2" stroke="#2a50a8" stroke-width="1.6"/></svg><svg style="left:652px;top:716px;" width="15" height="18" viewBox="0 0 15 18"><rect x="0.9" y="0.6" width="12.8" height="16.8" fill="#a86c10" stroke="#6a4408" stroke-width="0.8"/></svg><svg style="left:804px;top:715px;" width="18" height="18" viewBox="0 0 18 18"><rect x="0.8" y="0.8" width="16" height="16.2" rx="2.4" fill="#e8f4f4" stroke="#50787c" stroke-width="1.3"/></svg>
<div style="left:0px;top:748px;width:418px;height:32px;overflow:hidden;"><span class="t" style="left:7.89px;top:5.40px;font-size:20.8px;color:#000;transform:scaleX(1.0063);">Done</span><span class="t" style="left:64.97px;top:5.40px;font-size:20.8px;color:#000;transform:scaleX(1.0303);">parsing</span><span class="t" style="left:140.90px;top:5.40px;font-size:20.8px;color:#000;transform:scaleX(1.0818);">4</span><span class="t" style="left:160.00px;top:5.40px;font-size:20.8px;color:#000;transform:scaleX(0.9500);">files</span><span class="t" style="left:200.87px;top:5.40px;font-size:20.8px;color:#000;transform:scaleX(1.1286);">in</span><span class="t" style="left:226.60px;top:5.40px;font-size:20.8px;color:#000;transform:scaleX(0.9784);">0.003</span><span class="t" style="left:284.80px;top:5.40px;font-size:20.8px;color:#000;transform:scaleX(0.9675);">seconds</span><span class="t" style="left:367.36px;top:5.40px;font-size:20.8px;color:#000;transform:scaleX(1.0412);">(1333</span><span class="t" style="left:428.96px;top:5.40px;font-size:20.8px;color:#000;transform:scaleX(1.0417);">lines)</span></div>
<span class="t" style="left:435.36px;top:753.40px;font-size:20.8px;color:#000;transform:scaleX(0.9436);">Line:6</span>
<span class="t" style="left:495.50px;top:753.40px;font-size:20.8px;color:#000;transform:scaleX(1.0000);">Col:10</span>
<span class="t" style="left:562.03px;top:753.40px;font-size:20.8px;color:#000;transform:scaleX(0.9691);">Selected:0</span>
<span class="t" style="left:665.38px;top:753.40px;font-size:20.8px;color:#000;transform:scaleX(0.9215);">Lines:7</span>
<span class="t" style="left:735.18px;top:753.40px;font-size:20.8px;color:#000;transform:scaleX(1.0165);">Length:84</span>
<span class="t" style="left:865.70px;top:753.40px;font-size:20.8px;color:#000;transform:scaleX(0.9536);">AUTO(ASCII)</span>
<span class="t" style="left:1020.92px;top:753.40px;font-size:20.8px;color:#000;transform:scaleX(1.0400);">Insert</span>
<svg style="left:1100px;top:765px;" width="15" height="15" viewBox="0 0 15 15"><rect x="13" y="4" width="1" height="1" fill="#fff"/><rect x="12" y="3" width="1" height="1" fill="#a4a4a4"/><rect x="10" y="7" width="1" height="1" fill="#fff"/><rect x="9" y="6" width="1" height="1" fill="#a4a4a4"/><rect x="13" y="7" width="1" height="1" fill="#fff"/><rect x="12" y="6" width="1" height="1" fill="#a4a4a4"/><rect x="7" y="10" width="1" height="1" fill="#fff"/><rect x="6" y="9" width="1" height="1" fill="#a4a4a4"/><rect x="10" y="10" width="1" height="1" fill="#fff"/><rect x="9" y="9" width="1" height="1" fill="#a4a4a4"/><rect x="13" y="10" width="1" height="1" fill="#fff"/><rect x="12" y="9" width="1" height="1" fill="#a4a4a4"/><rect x="4" y="13" width="1" height="1" fill="#fff"/><rect x="3" y="12" width="1" height="1" fill="#a4a4a4"/><rect x="7" y="13" width="1" height="1" fill="#fff"/><rect x="6" y="12" width="1" height="1" fill="#a4a4a4"/><rect x="10" y="13" width="1" height="1" fill="#fff"/><rect x="9" y="12" width="1" height="1" fill="#a4a4a4"/><rect x="13" y="13" width="1" height="1" fill="#fff"/><rect x="12" y="12" width="1" height="1" fill="#a4a4a4"/></svg>
<div style="left:437px;top:730px;width:679px;height:4px;background:linear-gradient(180deg,#747474 0,#a4a4a4 1.2px,#d0d0d0 2.4px,rgba(233,233,233,0) 4px);"></div>
<div style="left:437px;top:331px;width:679px;height:399px;background:#fff;border:1px solid #b0b0b0;border-right:none;border-bottom:none;"></div>
<div style="left:438px;top:332px;width:678px;height:31px;background:#dcdcdc;"></div>
<svg style="left:443px;top:337px;" width="20" height="20" viewBox="0 0 20 20"><rect x="0" y="0" width="20" height="20" rx="5.4" fill="#80fc98"/><text x="5.6" y="16.6" font-family="Liberation Sans, sans-serif" font-weight="bold" font-style="italic" font-size="18" fill="#000" stroke="#000" stroke-width="0.3">f</text><path d="M14.2 14.4V12.8Q14.2 10.6 16.5 10.6Q18.8 10.6 18.8 12.8V14" stroke="#f0fff0" stroke-width="1.3" fill="none"/><rect x="12.8" y="13.6" width="7.2" height="6" fill="#2c6a00"/></svg>
<span class="t m" style="left:469.30px;top:334.60px;font-size:23px;color:#000;transform:scaleX(1.0102);"><span style="color:#0808bc">ap</span>pend</span>
<svg style="left:443px;top:368px;" width="20" height="20" viewBox="0 0 20 20"><rect x="0" y="0" width="20" height="20" rx="5.4" fill="#80fc98"/><text x="5.6" y="16.6" font-family="Liberation Sans, sans-serif" font-weight="bold" font-style="italic" font-size="18" fill="#000" stroke="#000" stroke-width="0.3">f</text><path d="M14.2 14.4V12.8Q14.2 10.6 16.5 10.6Q18.8 10.6 18.8 12.8V14" stroke="#f0fff0" stroke-width="1.3" fill="none"/><rect x="12.8" y="13.6" width="7.2" height="6" fill="#2c6a00"/></svg>
<span class="t m" style="left:469.30px;top:365.60px;font-size:23px;color:#000;transform:scaleX(1.0100);">c<span style="color:#0808bc">ap</span>acity</span>
<svg style="left:443px;top:399px;" width="20" height="20" viewBox="0 0 20 20"><rect x="0" y="0" width="20" height="20" rx="5.4" fill="#80fc98"/><text x="5.6" y="16.6" font-family="Liberation Sans, sans-serif" font-weight="bold" font-style="italic" font-size="18" fill="#000" stroke="#000" stroke-width="0.3">f</text><path d="M14.2 14.4V12.8Q14.2 10.6 16.5 10.6Q18.8 10.6 18.8 12.8V14" stroke="#f0fff0" stroke-width="1.3" fill="none"/><rect x="12.8" y="13.6" width="7.2" height="6" fill="#2c6a00"/></svg>
<span class="t m" style="left:469.30px;top:396.60px;font-size:23px;color:#000;transform:scaleX(1.0100);">sw<span style="color:#0808bc">ap</span></span>
<svg style="left:443px;top:430px;" width="20" height="20" viewBox="0 0 20 20"><rect x="0" y="0" width="20" height="20" rx="5.4" fill="#dea684"/><text x="10.6" y="15" font-family="Liberation Sans, sans-serif" font-weight="bold" font-style="italic" font-size="14.2" text-anchor="middle" fill="#000" stroke="#000" stroke-width="0.7">T</text></svg>
<span class="t m" style="left:469.30px;top:427.60px;font-size:23px;color:#000;transform:scaleX(1.0098);">v<span style="color:#0808bc">a</span>lue<span style="font-weight:bold;position:relative;top:1.2px">_</span>ty<span style="color:#0808bc">p</span>e</span>
<svg style="left:443px;top:461px;" width="20" height="20" viewBox="0 0 20 20"><rect x="0" y="0" width="20" height="20" rx="5.4" fill="#dea684"/><text x="10.6" y="15" font-family="Liberation Sans, sans-serif" font-weight="bold" font-style="italic" font-size="14.2" text-anchor="middle" fill="#000" stroke="#000" stroke-width="0.7">T</text></svg>
<span class="t m" style="left:469.30px;top:458.60px;font-size:23px;color:#000;transform:scaleX(1.0098);">tr<span style="color:#0808bc">a</span>its<span style="font-weight:bold;position:relative;top:1.2px">_</span>ty<span style="color:#0808bc">p</span>e</span>
<svg style="left:443px;top:492px;" width="20" height="20" viewBox="0 0 20 20"><rect x="0" y="0" width="20" height="20" rx="5.4" fill="#dea684"/><text x="10.6" y="15" font-family="Liberation Sans, sans-serif" font-weight="bold" font-style="italic" font-size="14.2" text-anchor="middle" fill="#000" stroke="#000" stroke-width="0.7">T</text></svg>
<span class="t m" style="left:469.30px;top:489.60px;font-size:23px;color:#000;transform:scaleX(1.0100);"><span style="color:#0808bc">a</span>llocator<span style="font-weight:bold;position:relative;top:1.2px">_</span>ty<span style="color:#0808bc">p</span>e</span>
<svg style="left:520px;top:494px;" width="18" height="28" viewBox="0 0 18 28"><path d="M1.4 2.2V22.6L6 18.4L9.5 25.6L12.5 24.4L9.2 16.7H15.5Z" fill="#fff" stroke="#000" stroke-width="1.1" stroke-linejoin="miter"/></svg>
<div style="left:0px;top:0px;width:1116px;height:1px;background:#04325a;"></div>
<div style="left:0px;top:0px;width:1px;height:781px;background:#0b4c6c;"></div>
<div style="left:1115px;top:0px;width:1px;height:331px;background:#0c2a5a;"></div>
<div style="left:1115px;top:733px;width:1px;height:48px;background:#0c2a5a;"></div>
<div style="left:0px;top:780px;width:1116px;height:1px;background:#0b4464;"></div>
</div></body></html>
